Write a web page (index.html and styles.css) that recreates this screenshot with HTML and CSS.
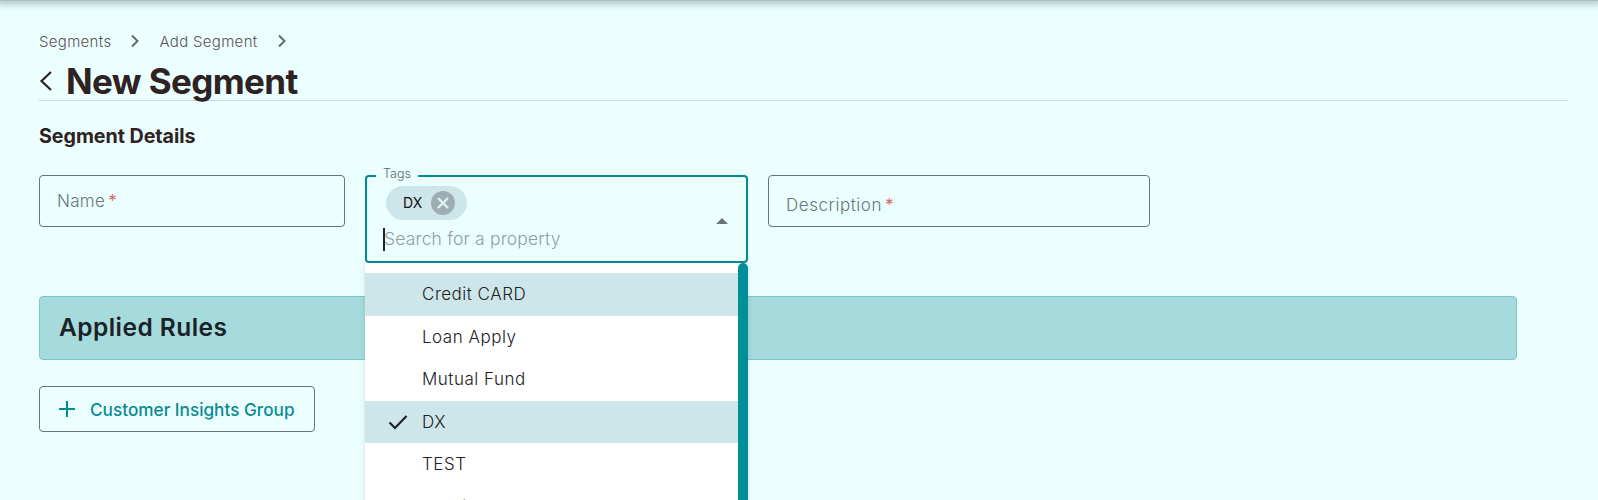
FILE: index.html
```html
<!DOCTYPE html>
<html lang="en">
<head>
<meta charset="utf-8">
<title>New Segment</title>
<link rel="stylesheet" href="styles.css">
</head>
<body>
<div class="topbar"></div>
<main class="page">
  <nav class="crumbs">
    <span>Segments</span>
    <svg class="chev" viewBox="0 0 10 14"><path d="M2 1.500 7.500 7 2 12.500"/></svg>
    <span>Add Segment</span>
    <svg class="chev" viewBox="0 0 10 14"><path d="M2 1.500 7.500 7 2 12.500"/></svg>
  </nav>
  <header class="title-row">
    <svg class="back" viewBox="0 0 14 22"><path d="M12 2 2.500 11 12 20"/></svg>
    <h1>New Segment</h1>
  </header>
  <h2 class="details">Segment Details</h2>
  <div class="fields">
    <div class="field name"><span class="ph">Name<i>*</i></span></div>
    <div class="tags-wrap">
      <div class="tags">
        <span class="legend">Tags</span>
        <span class="chip">DX
          <svg class="chip-x" viewBox="0 0 24 24"><circle cx="12" cy="12" r="12"/><path d="M7 7l10 10M17 7 7 17"/></svg>
        </span>
        <div class="search"><b class="caret"></b>Search for a property</div>
        <span class="arrow"></span>
      </div>
      <div class="menu">
        <ul>
          <li class="sel">Credit CARD</li>
          <li>Loan Apply</li>
          <li>Mutual Fund</li>
          <li class="sel"><svg class="check" viewBox="0 0 20 16"><path d="M1.500 8.500 7 14 18.500 2"/></svg>DX</li>
          <li>TEST</li>
          <li>Credit</li>
        </ul>
        <div class="bar"></div>
      </div>
    </div>
    <div class="field desc"><span class="ph">Description<i>*</i></span></div>
  </div>
  <section class="rules"><h3>Applied Rules</h3></section>
  <button class="group" type="button">
    <svg class="plus" viewBox="0 0 16 16"><path d="M8 0v16M0 8h16"/></svg>
    Customer Insights Group
  </button>
</main>
</body>
</html>
```
FILE: styles.css
```css
* { box-sizing: border-box; }
html, body { margin: 0; height: 500px; overflow: hidden; }
body { background: #ebffff; font-family: "Inter", "Liberation Sans", sans-serif; color: #2f2222; }
.topbar { height: 1px; background: #a9c0c0; box-shadow: 0 0 7px 3px rgba(70, 100, 100, .42); }
.page { padding: 29px 30px 0 39px; height: 499px; overflow: hidden; }
.crumbs { display: flex; align-items: center; height: 22px; font-size: 15px; letter-spacing: .32px; font-weight: 300; color: #5f5353; }
.chev { width: 10px; height: 14px; margin: 0 19px; fill: none; stroke: #5d6b70; stroke-width: 2; }
.title-row { display: flex; align-items: center; height: 49px; border-bottom: 1px solid #cbd5da; padding-top: 9px; }
.back { width: 14px; height: 24px; margin: 0 13px 0 0; fill: none; stroke: #2f2222; stroke-width: 2.200; }
h1 { margin: 0; font-size: 35px; line-height: 40px; font-weight: 700; letter-spacing: -.6px; }
.details { margin: 24px 0 0; font-size: 19.700px; line-height: 22px; font-weight: 700; letter-spacing: -.05px; }
.fields { display: flex; align-items: flex-start; margin-top: 28px; height: 121px; }
.field { border: 1px solid #66757c; border-radius: 4px; height: 52px; font-size: 17px; font-weight: 300; letter-spacing: .3px; color: #6a7579; padding: 0 17px; display: flex; align-items: center; }
.name { width: 306px; margin-right: 20px; }
.desc { width: 382px; margin-left: 20px; padding-top: 8px; letter-spacing: .55px; }
.ph i { color: #d0604c; font-style: normal; margin-left: 3px; }
.tags-wrap { width: 383px; position: relative; }
.tags { position: relative; height: 88px; border: 2px solid #008a93; border-radius: 4px; }
.legend { position: absolute; top: -10px; left: 9px; padding: 0 7px; background: #ebffff; font-size: 12.500px; font-weight: 300; line-height: 14px; color: #5f6a6e; }
.chip { position: absolute; top: 9px; left: 19px; width: 81px; height: 34px; border-radius: 17px; background: #cde6e9; font-size: 14px; line-height: 34px; color: #111; padding-left: 17px; }
.chip-x { position: absolute; top: 5px; left: 45px; width: 24px; height: 24px; }
.chip-x circle { fill: #9caeb1; }
.chip-x path { stroke: #e3f0f1; stroke-width: 2.400; fill: none; }
.search { position: absolute; top: 50px; left: 16px; font-size: 17.500px; font-weight: 300; letter-spacing: .17px; line-height: 24px; color: #929c9f; display: flex; align-items: center; }
.caret { width: 2px; height: 23px; background: #222; margin-right: -1px; }
.arrow { position: absolute; top: 41px; right: 18px; border: 6px solid transparent; border-top: 0; border-bottom: 6px solid #6b7478; }
.menu { position: absolute; top: 88px; left: 0; width: 383px; height: 240px; background: #fff; padding-top: 10px; box-shadow: 0 2px 5px rgba(60, 90, 100, .2); z-index: 2; }
.menu ul { list-style: none; margin: 0; padding: 0; width: 373px; }
.menu li { position: relative; height: 42.500px; line-height: 42.500px; padding-left: 57px; font-size: 17px; font-weight: 300; letter-spacing: .5px; color: #222; }
.menu li.sel { background: #cde6e9; }
.check { position: absolute; left: 23px; top: 13px; width: 20px; height: 16px; fill: none; stroke: #222; stroke-width: 2.200; }
.bar { position: absolute; top: 0; right: 0; width: 10px; height: 240px; border-radius: 5px 5px 0 0; background: #008f98; }
.rules { width: 1478px; height: 64px; border: 1px solid #7ec5c9; border-radius: 4px; background: #a6dbde; padding: 0 0 2px 19px; display: flex; align-items: center; }
h3 { margin: 0; font-size: 24.500px; font-weight: 600; letter-spacing: .45px; color: #1b2226; }
.group { display: flex; align-items: center; width: 276px; height: 46px; margin-top: 26px; padding: 0 0 0 19px; background: none; border: 1px solid #66757c; border-radius: 4px; color: #0a8a93; font: 500 17.200px "Inter", "Liberation Sans", sans-serif; }
.plus { width: 16px; height: 16px; margin-right: 15px; fill: none; stroke: #008a93; stroke-width: 2; }
```
